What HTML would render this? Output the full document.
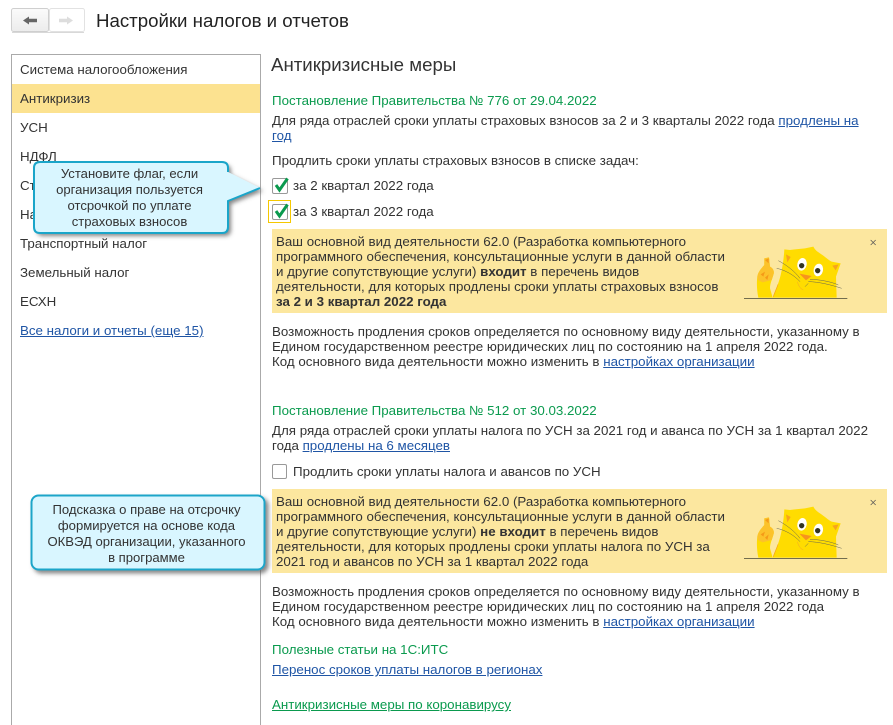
<!DOCTYPE html>
<html><head><meta charset="utf-8">
<style>
html,body{margin:0;padding:0;background:#fff}
#p{position:relative;width:893px;height:725px;overflow:hidden;background:#fff;font-family:"Liberation Sans",Arial,sans-serif;font-size:13.33px;color:#333}
.t{position:absolute;white-space:nowrap;line-height:15px}
.g{color:#0a9a4e}
a{color:#1f55a5;text-decoration:underline}
.b{position:absolute;background:#fce79f}
.c{position:absolute;text-align:center;line-height:16px;color:#333;white-space:nowrap;font-size:13.1px}
</style></head><body><div id="p">
<svg style="position:absolute;left:0;top:0" width="893" height="725">
<defs><linearGradient id="bt" x1="0" y1="0" x2="0" y2="1"><stop offset="0" stop-color="#fbfbfb"/><stop offset="1" stop-color="#ececec"/></linearGradient></defs>
<rect x="49.500" y="8.500" width="35" height="23" rx="2" fill="#fff" stroke="#e2e2e2"/>
<rect x="11.500" y="8.500" width="37" height="23" rx="2" fill="url(#bt)" stroke="#cfcfcf"/>
<path d="M12 32.500H84" stroke="#d8d8d8"/>
<path d="M28 20.500H37" stroke="#666" stroke-width="3.500"/><path d="M23 20.500L29 16.500V24.500Z" fill="#666"/>
<path d="M59 20.500H68" stroke="#ddd" stroke-width="3.500"/><path d="M73 20.500L67 16.500V24.500Z" fill="#ddd"/>
<rect x="11.500" y="54.500" width="249" height="680" fill="#fff" stroke="#aaa"/>
<rect x="12" y="84" width="248" height="29" fill="#fce290"/>
</svg>
<div class="t" style="left:96px;top:9px;font-size:18.67px;line-height:24px;color:#222">Настройки налогов и отчетов</div>
<div class="t" style="left:20px;top:62px">Система налогообложения</div>
<div class="t" style="left:20px;top:91px">Антикризиз</div>
<div class="t" style="left:20px;top:120px">УСН</div>
<div class="t" style="left:20px;top:149px">НДФЛ</div>
<div class="t" style="left:20px;top:178px">Страховые взносы</div>
<div class="t" style="left:20px;top:207px">Налог на прибыль</div>
<div class="t" style="left:20px;top:236px">Транспортный налог</div>
<div class="t" style="left:20px;top:265px">Земельный налог</div>
<div class="t" style="left:20px;top:294px">ЕСХН</div>
<div class="t" style="left:20px;top:323px"><a>Все налоги и отчеты (еще 15)</a></div>

<div class="t" style="left:271px;top:53px;font-size:18.67px;line-height:24px;color:#333">Антикризисные меры</div>
<div class="t g" style="left:272px;top:93px">Постановление Правительства № 776 от 29.04.2022</div>
<div class="t" style="left:272px;top:113px">Для ряда отраслей сроки уплаты страховых взносов за 2 и 3 кварталы 2022 года <a>продлены на</a></div>
<div class="t" style="left:272px;top:128px"><a>год</a></div>
<div class="t" style="left:272px;top:153px">Продлить сроки уплаты страховых взносов в списке задач:</div>
<div class="t" style="left:293px;top:178px">за 2 квартал 2022 года</div>
<div class="t" style="left:293px;top:204px">за 3 квартал 2022 года</div>
<svg style="position:absolute;left:260px;top:170px" width="40" height="60">
<rect x="12.500" y="8.500" width="15" height="15" rx="1.500" fill="#fff" stroke="#999"/>
<path d="M16 15L19.500 20L27.500 8.500" fill="none" stroke="#0a9a4e" stroke-width="3"/>
<rect x="8.500" y="30.500" width="22" height="22" fill="none" stroke="#f5c800"/>
<rect x="12.500" y="34.500" width="15" height="15" rx="1.500" fill="#fff" stroke="#999"/>
<path d="M16 41L19.500 46L27.500 34.500" fill="none" stroke="#0a9a4e" stroke-width="3"/>
</svg>

<div class="b" style="left:272px;top:229px;width:615px;height:84px"></div>
<div class="t" style="left:276px;top:234px">Ваш основной вид деятельности 62.0 (Разработка компьютерного<br>программного обеспечения, консультационные услуги в данной области<br>и другие сопутствующие услуги) <b>входит</b> в перечень видов<br>деятельности, для которых продлены сроки уплаты страховых взносов<br><b>за 2 и 3 квартал 2022 года</b></div>
<div class="t" style="left:272px;top:324px">Возможность продления сроков определяется по основному виду деятельности, указанному в<br>Едином государственном реестре юридических лиц по состоянию на 1 апреля 2022 года.<br>Код основного вида деятельности можно изменить в <a>настройках организации</a></div>

<div class="t g" style="left:272px;top:403px">Постановление Правительства № 512 от 30.03.2022</div>
<div class="t" style="left:272px;top:423px">Для ряда отраслей сроки уплаты налога по УСН за 2021 год и аванса по УСН за 1 квартал 2022<br>года <a>продлены на 6 месяцев</a></div>
<svg style="position:absolute;left:272px;top:464px" width="16" height="16"><rect x=".5" y=".5" width="14" height="14" rx="1.500" fill="#fff" stroke="#999"/></svg>
<div class="t" style="left:293px;top:464px">Продлить сроки уплаты налога и авансов по УСН</div>

<div class="b" style="left:272px;top:489px;width:615px;height:84px"></div>
<div class="t" style="left:276px;top:494px">Ваш основной вид деятельности 62.0 (Разработка компьютерного<br>программного обеспечения, консультационные услуги в данной области<br>и другие сопутствующие услуги) <b>не входит</b> в перечень видов<br>деятельности, для которых продлены сроки уплаты налога по УСН за<br>2021 год и авансов по УСН за 1 квартал 2022 года</div>
<div class="t" style="left:272px;top:584px">Возможность продления сроков определяется по основному виду деятельности, указанному в<br>Едином государственном реестре юридических лиц по состоянию на 1 апреля 2022 года<br>Код основного вида деятельности можно изменить в <a>настройках организации</a></div>
<div class="t g" style="left:272px;top:642px">Полезные статьи на 1С:ИТС</div>
<div class="t" style="left:272px;top:662px"><a>Перенос сроков уплаты налогов в регионах</a></div>
<div class="t" style="left:272px;top:697px"><a style="color:#0a9a4e">Антикризисные меры по коронавирусу</a></div>

<svg style="position:absolute;left:0;top:0" width="893" height="725">
<defs>
<filter id="s" x="-10%" y="-20%" width="125%" height="150%"><feDropShadow dx="3" dy="3" stdDeviation="2" flood-color="#555" flood-opacity=".7"/></filter>
<g id="cat">
<path d="M72 220.500H382" stroke="#443" stroke-width="2" fill="none"/>
<path d="M115 218C110 195 110 170 112 155C114 143 120 135 133 120L133 100L147 97L150 125C160 130 164 140 160 150C156 165 150 175 150 190L158 218Z" fill="#ffdc00"/>
<path d="M112 155C114 143 120 135 133 120L133 100L147 97L150 125C160 130 164 140 160 150L155 165L128 172L113 165Z" fill="#fcc22a"/>
<path d="M122 148L135 140L130 155ZM135 158L146 148L142 165ZM135 105L146 100L146 115Z" fill="#f59a18"/>
<path d="M158 218C164 200 175 180 182 150C188 125 192 95 193 73L210 75C225 72 240 72 255 70L280 65C285 75 292 80 300 85C315 95 325 105 335 110L362 115L348 155L350 218Z" fill="#ffdc00"/>
<path d="M198 88L212 96L202 112ZM337 122L356 118L347 136Z" fill="#f7a41d"/>
<path d="M160 215C165 200 170 190 174 178" fill="none" stroke="#f5a31a" stroke-width="2"/>
<path d="M232 170C236 185 243 192 250 195" fill="none" stroke="#f7b51d" stroke-width="2"/>
<ellipse cx="246" cy="118" rx="14" ry="19" transform="rotate(12 246 118)" fill="#fff"/>
<ellipse cx="295" cy="135" rx="14" ry="19" transform="rotate(12 295 135)" fill="#fff"/>
<circle cx="245" cy="122" r="8" fill="#332"/><circle cx="293" cy="137" r="8" fill="#332"/>
<path d="M238 146L275 153L258 166Z" fill="#f7941d"/>
<path d="M175 107C200 120 225 140 240 160M170 130C195 135 222 150 240 170M265 175L255 185M270 163C295 163 335 170 355 180M265 170C295 170 335 180 365 190" fill="none" stroke="#665" stroke-width="1.500"/>
<path d="M452 45L467 60M467 45L452 60" stroke="#555" stroke-width="2.200"/>
</g>
</defs>
<svg x="720" y="225" width="173" height="90" viewBox="0 0 519 270"><use href="#cat"/></svg>
<svg x="720" y="485" width="173" height="90" viewBox="0 0 519 270"><use href="#cat"/></svg>
<path filter="url(#s)" d="M40 162H222Q228 162 228 168V172L260 188L228 201V227Q228 233 222 233H40Q34 233 34 227V168Q34 162 40 162Z" fill="#d9f6ff"/>
<path d="M228 172V168Q228 162 222 162H40Q34 162 34 168V227Q34 233 40 233H222Q228 233 228 227V201L260 188" fill="none" stroke="#1aa5c9" stroke-width="2"/>
<rect filter="url(#s)" x="31.500" y="495.500" width="233" height="74" rx="7" fill="#d9f6ff" stroke="#1aa5c9" stroke-width="2"/>
</svg>
<div class="c" style="left:34px;top:166px;width:191px">Установите флаг, если<br>организация пользуется<br>отсрочкой по уплате<br>страховых взносов</div>
<div class="c" style="left:31px;top:502px;width:231px">Подсказка о праве на отсрочку<br>формируется на основе кода<br>ОКВЭД организации, указанного<br>в программе</div>
</div></body></html>
